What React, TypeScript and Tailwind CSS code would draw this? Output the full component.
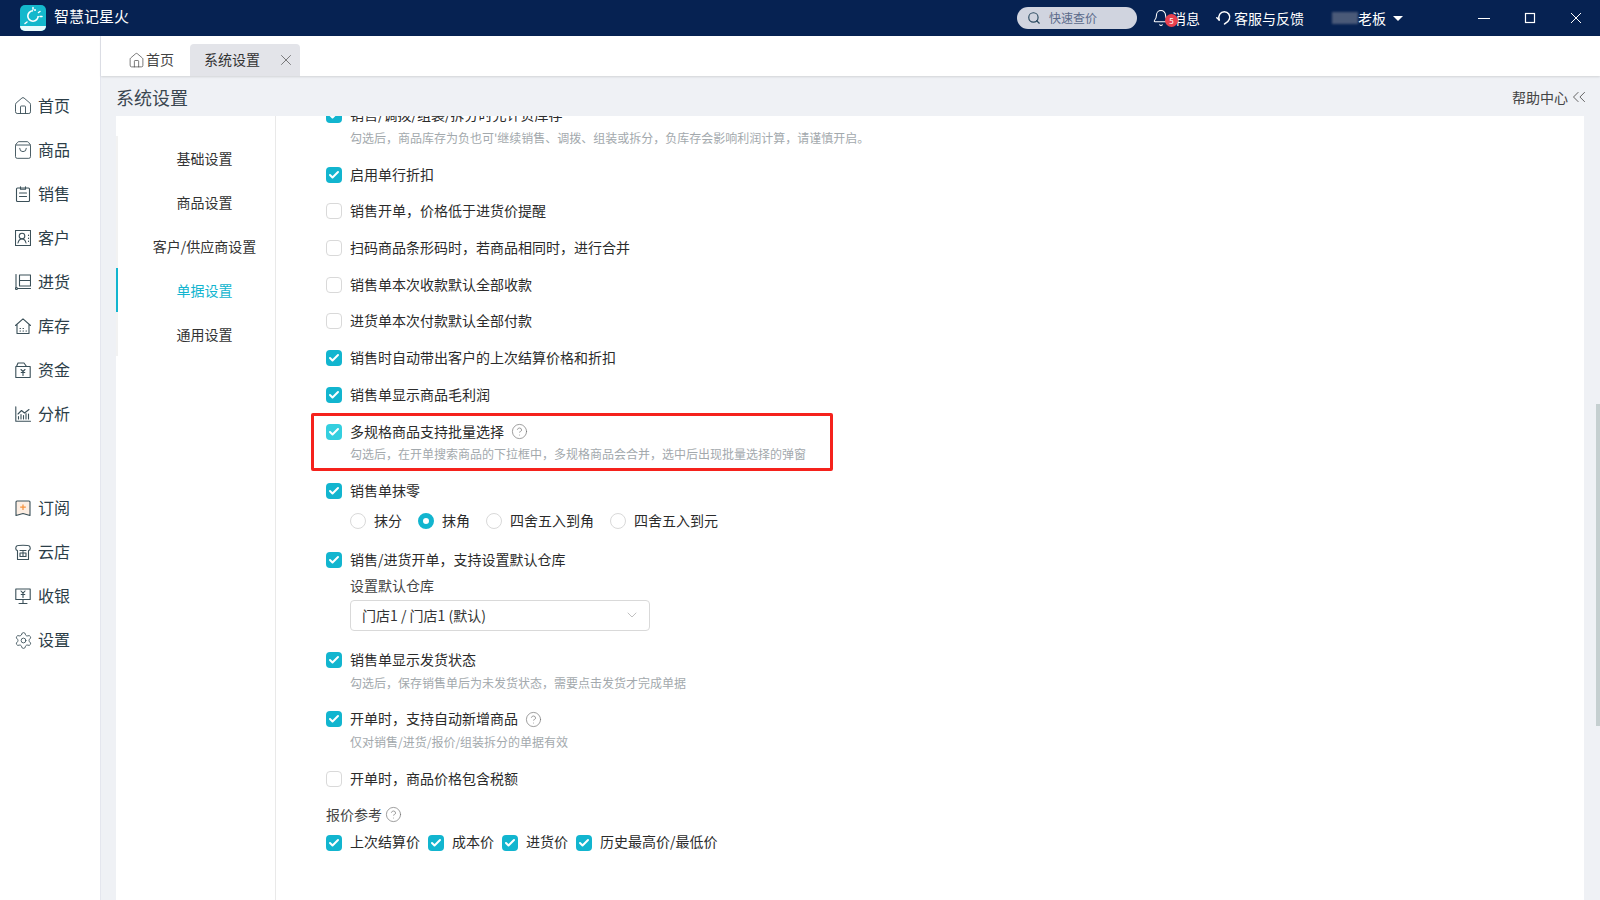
import React from "react";
import { ChevronDown, ChevronsLeft, X, Search, Check, Home, ShoppingBag, Settings, Bell, CircleHelp } from "lucide-react";

const FONT = "font-['Microsoft_YaHei','Noto_Sans_CJK_SC','Noto_Sans',sans-serif]";

type IconProps = { className?: string };

const stroke = {
  fill: "none",
  stroke: "currentColor",
  strokeWidth: 1.1,
  strokeLinecap: "round" as const,
  strokeLinejoin: "round" as const,
};

function SalesIcon({ className }: IconProps) {
  return (
    <svg viewBox="0 0 16 16" className={className} {...stroke}>
      <rect x="1.500" y="2" width="13" height="13.500" rx="1" />
      <path d="M5.500 .8v2.400h5V.8M4.500 7h7M4.500 10.500h7" />
    </svg>
  );
}

function CustomerIcon({ className }: IconProps) {
  return (
    <svg viewBox="0 0 16 16" className={className} {...stroke}>
      <rect x=".5" y=".5" width="15" height="15" />
      <circle cx="7" cy="6" r="2.800" />
      <path d="M3 13c.5-2.500 2.200-4 4-4s3.500 1.500 4 4M13.500 5v.5M13.500 8v.5M13.500 11v.5" />
    </svg>
  );
}

function PurchaseIcon({ className }: IconProps) {
  return (
    <svg viewBox="0 0 16 16" className={className} {...stroke}>
      <path d="M1 .5v13M4.500 1h11v11h-11zM4.500 6.500h11M3 14.500h12.500" />
      <circle cx="1.500" cy="14.500" r="1" />
    </svg>
  );
}

function StockIcon({ className }: IconProps) {
  return (
    <svg viewBox="0 0 16 16" className={className} {...stroke}>
      <path d="M.5 7.500 8 .8l7.500 6.700M2 6.500v9h12v-9" />
      <path d="M5 10.500h.5M8 10.500h.5M5 13h.5M8 13h.5M11 13h.5" />
    </svg>
  );
}

function FundsIcon({ className }: IconProps) {
  return (
    <svg viewBox="0 0 16 16" className={className} {...stroke}>
      <path d="M.8 4.500h14.400v11H.8zM1.500 4.500 3 1h6l2.500 3.500" />
      <path d="M6 7.500l2 2 2-2M8 9.500V13.500M6.200 10.500h3.600" />
    </svg>
  );
}

function AnalysisIcon({ className }: IconProps) {
  return (
    <svg viewBox="0 0 16 16" className={className} {...stroke}>
      <path d="M.8 .8v14.400h14.700" />
      <path d="M3 8 6.500 4.500 9.500 7 14 3.500" />
      <path d="M3.500 13v-2.500M6 13V8.500M8.500 13V9.500M11 13V7.500M13.500 13V8" />
    </svg>
  );
}

function SubscribeIcon({ className }: IconProps) {
  return (
    <svg viewBox="0 0 16 16" className={className}>
      <path d="M1 2a1 1 0 0 1 1-1h12a1 1 0 0 1 1 1v13.500L8 13.500 1 15.500z" fill="#fdeee2" stroke="currentColor" strokeWidth="1.100" strokeLinejoin="round" />
      <path d="M8 4.500v5.500M5.200 7.200h5.600" stroke="#f5913b" strokeWidth="1.200" fill="none" />
    </svg>
  );
}

function ShopIcon({ className }: IconProps) {
  return (
    <svg viewBox="0 0 16 16" className={className} {...stroke}>
      <path d="M2.500 6.500C.3 6.500.3 3 2 1.800c1-.8 11-.8 12 0C15.700 3 15.700 6.500 13.500 6.500v9h-11z" />
      <path d="M5 6.500h6M5 9h6v3.500H5zM8 7.500v5" />
    </svg>
  );
}

function CashierIcon({ className }: IconProps) {
  return (
    <svg viewBox="0 0 16 16" className={className} {...stroke}>
      <rect x=".8" y="1" width="14.400" height="10.500" />
      <path d="M8 11.500v4M4 15.500h8M6 3l2 2.200L10 3M8 5.200V9.500M6.200 6.500h3.600" />
    </svg>
  );
}

function HeadsetIcon({ className }: IconProps) {
  return (
    <svg viewBox="0 0 16 16" className={className} fill="none" stroke="currentColor" strokeWidth="1.500" strokeLinecap="round">
      <path d="M3.200 10C1.800 5.500 4.500 1.800 8.300 1.800c3.800 0 6.500 3.500 5 7.500-.8 2.200-2.500 3.700-4.800 4.700" />
      <path d="M.8 7.700 3.200 10" />
    </svg>
  );
}

// App logo: teal tile with a small sun and a label strip
function Logo() {
  return (
    <svg viewBox="0 0 26 26" className="h-[26px] w-[26px]">
      <rect width="26" height="26" rx="5" fill="#14b8cc" />
      <path d="M0 21h26a5 5 0 0 1-5 5H5a5 5 0 0 1-5-5z" fill="#e8fbfd" />
      <circle cx="13" cy="11" r="5.200" fill="none" stroke="#fff" strokeWidth="1.600" strokeDasharray="24 8" />
      <path d="M13 2.500v1.800M20 6.500l-1.500 1M22 11.500h-2M7 17l-2 1.500" stroke="#fff" strokeWidth="1.500" strokeLinecap="round" />
      <circle cx="15" cy="5" r="1" fill="#fff" />
    </svg>
  );
}

const navTop = [
  { label: "首页", icon: Home, size: "h-5 w-5 -mx-[2px]" },
  { label: "商品", icon: ShoppingBag, size: "h-5 w-5 -mx-[2px]" },
  { label: "销售", icon: SalesIcon, size: "h-4 w-4" },
  { label: "客户", icon: CustomerIcon, size: "h-4 w-4" },
  { label: "进货", icon: PurchaseIcon, size: "h-4 w-4" },
  { label: "库存", icon: StockIcon, size: "h-4 w-4" },
  { label: "资金", icon: FundsIcon, size: "h-4 w-4" },
  { label: "分析", icon: AnalysisIcon, size: "h-4 w-4" },
];

const navBottom = [
  { label: "订阅", icon: SubscribeIcon, size: "h-4 w-4" },
  { label: "云店", icon: ShopIcon, size: "h-4 w-4" },
  { label: "收银", icon: CashierIcon, size: "h-4 w-4" },
  { label: "设置", icon: Settings, size: "h-[19px] w-[19px] -mx-[1.5px]" },
];

const subMenu = ["基础设置", "商品设置", "客户/供应商设置", "单据设置", "通用设置"];

function NavItem({ label, icon: Icon, size }: { label: string; icon: React.ComponentType<any>; size: string }) {
  return (
    <div className="flex h-11 items-center gap-[7px] pl-[15px] text-base text-[#2c3e48]">
      <Icon className={`${size} shrink-0 text-[#3b5059]`} strokeWidth={1.1} />
      <span className="pb-[2px]">{label}</span>
    </div>
  );
}

function Box({ checked, light }: { checked?: boolean; light?: boolean }) {
  if (!checked) {
    return <span className="h-4 w-4 shrink-0 rounded-[4px] border border-[#d9d9d9] bg-white" />;
  }
  return (
    <span className={`flex h-4 w-4 shrink-0 items-center justify-center rounded-[4px] ${light ? "bg-[#34cfdf]" : "bg-[#12b5cf]"}`}>
      <Check className="h-3 w-3 text-white" strokeWidth={4} />
    </span>
  );
}

function Help() {
  return <CircleHelp className="h-[17px] w-[17px] text-[#777]" strokeWidth={1} />;
}

function Row({ label, checked, help, hint, light }: { label: string; checked?: boolean; help?: boolean; hint?: string; light?: boolean }) {
  return (
    <div>
      <div className="flex h-5 items-center gap-2 text-sm leading-5 text-[#2b2b2b]">
        <Box checked={checked} light={light} />
        <span className="pb-[2px]">{label}</span>
        {help && <span className="-ml-[1px] flex"><Help /></span>}
      </div>
      {hint && <p className={`${light ? "mt-[2px] mb-[1px]" : "mt-[3px]"} pl-6 text-xs leading-5 text-[#a3a9ad]`}>{hint}</p>}
    </div>
  );
}

function Radio({ label, on }: { label: string; on?: boolean }) {
  return (
    <div className="flex items-center gap-2 text-sm text-[#2b2b2b]">
      {on ? (
        <span className="h-4 w-4 rounded-full border-[5px] border-[#12b5cf] bg-white" />
      ) : (
        <span className="h-4 w-4 rounded-full border border-[#d9d9d9] bg-white" />
      )}
      <span className="pb-[2px]">{label}</span>
    </div>
  );
}

export default function App() {
  return (
    <div className={`flex h-screen w-full flex-col overflow-hidden bg-white ${FONT}`}>
      {/* Title bar */}
      <header className="flex h-9 shrink-0 items-center bg-[#062252] text-white">
        <div className="ml-5 flex items-center gap-2">
          <Logo />
          <span className="pb-1 text-[15px]">智慧记星火</span>
        </div>
        <div className="ml-auto flex h-[22px] w-[120px] items-center rounded-full bg-[#d0d4df] pl-[10px] text-xs text-[#5a6a8a]">
          <Search className="h-[14px] w-[14px] text-[#2a4a60]" strokeWidth={2} />
          <span className="ml-[8px]">快速查价</span>
        </div>
        <div className="relative ml-[15px] flex items-center text-sm">
          <Bell className="h-[18px] w-[18px]" strokeWidth={1.4} />
          <span className="absolute left-[13px] top-[6px] flex h-[13px] w-[13px] items-center justify-center rounded-full bg-[#e8414f] text-[8px]">5</span>
          <span className="ml-[2px]">消息</span>
        </div>
        <div className="ml-4 flex items-center gap-[2px] text-sm">
          <HeadsetIcon className="h-4 w-4" />
          <span>客服与反馈</span>
        </div>
        <div className="ml-[28px] flex items-center text-sm">
          <span className="h-3 w-[26px] bg-[#4a5a78] blur-[1px]" />
          <span>老板</span>
          <span className="ml-[7px] h-0 w-0 border-x-[5px] border-t-[5px] border-x-transparent border-t-white" />
        </div>
        {/* Window buttons */}
        <div className="ml-[75px] flex items-center gap-[34px] pr-[18px]">
          <svg viewBox="0 0 12 12" className="h-3 w-3" stroke="currentColor" fill="none" strokeWidth="1">
            <path d="M0 6.500h12" />
          </svg>
          <svg viewBox="0 0 12 12" className="h-3 w-3" stroke="currentColor" fill="none" strokeWidth="1.200">
            <rect x="1.500" y="1.500" width="9" height="9" />
          </svg>
          <svg viewBox="0 0 12 12" className="h-3 w-3" stroke="currentColor" fill="none" strokeWidth="1">
            <path d="M1 1l10 10M11 1 1 11" />
          </svg>
        </div>
      </header>

      <div className="flex min-h-0 flex-1">
        {/* Main navigation */}
        <aside className="w-[101px] shrink-0 border-r border-[#e4e6ee] pt-12">
          {navTop.map((n) => (
            <NavItem key={n.label} {...n} />
          ))}
          <div className="h-[50px]" />
          {navBottom.map((n) => (
            <NavItem key={n.label} {...n} />
          ))}
        </aside>

        <div className="flex min-w-0 flex-1 flex-col bg-[#eff1f5]">
          {/* Open tabs */}
          <div className="flex h-10 shrink-0 items-end bg-white pl-[27px] text-sm text-[#333] shadow-[0_1px_2px_rgba(0,0,0,0.12)]">
            <div className="flex h-8 w-[62px] items-center gap-[1px] text-[#444]">
              <Home className="h-[17px] w-[17px]" strokeWidth={1} />
              <span className="pb-[2px]">首页</span>
            </div>
            <div className="flex h-8 w-[110px] items-center justify-between rounded-t bg-[#e3e4e9] pl-[14px] pr-[5px]">
              <span className="pb-[2px]">系统设置</span>
              <X className="h-[18px] w-[18px] text-[#555]" strokeWidth={1} />
            </div>
          </div>

          {/* Page title */}
          <div className="flex h-10 shrink-0 items-center justify-between pl-[15px] pr-[10px]">
            <h1 className="pt-[2px] text-lg text-[#3a4650]">系统设置</h1>
            <div className="flex items-center pt-[2px] text-sm text-[#444]">
              <span>帮助中心</span>
              <ChevronsLeft className="h-[22px] w-[22px] text-[#555]" strokeWidth={1} />
            </div>
          </div>

          <div className="relative flex min-h-0 flex-1 pl-[15px] pr-4">
            <div className="flex min-w-0 flex-1 bg-white">
              {/* Settings sections */}
              <nav className="w-[160px] shrink-0 border-r border-[#e9e9e9] pt-5">
                <div className="border-l-2 border-[#f2f2f2] text-sm text-[#333]">
                  {subMenu.map((s) => (
                    <div
                      key={s}
                      className={`-ml-[2px] flex h-11 items-center justify-center pl-[18px] ${s === "单据设置" ? "text-[#12b5cf] shadow-[inset_2px_0_0_#12b5cf]" : ""}`}
                    >
                      {s}
                    </div>
                  ))}
                </div>
              </nav>

              {/* Document options, scrolled part-way */}
              <div className="relative min-w-0 flex-1 overflow-hidden pl-[50px]">
                <div className="-mt-[11px] flex flex-col gap-[16.7px]">
                  <Row
                    checked
                    label="销售/调拨/组装/拆分时允许负库存"
                    hint="勾选后，商品库存为负也可'继续销售、调拨、组装或拆分，负库存会影响利润计算，请谨慎开启。"
                  />
                  <Row checked label="启用单行折扣" />
                  <Row label="销售开单，价格低于进货价提醒" />
                  <Row label="扫码商品条形码时，若商品相同时，进行合并" />
                  <Row label="销售单本次收款默认全部收款" />
                  <Row label="进货单本次付款默认全部付款" />
                  <Row checked label="销售时自动带出客户的上次结算价格和折扣" />
                  <Row checked label="销售单显示商品毛利润" />
                  <Row
                    checked
                    light
                    help
                    label="多规格商品支持批量选择"
                    hint="勾选后，在开单搜索商品的下拉框中，多规格商品会合并，选中后出现批量选择的弹窗"
                  />
                  <div>
                    <Row checked label="销售单抹零" />
                    <div className="mt-[10px] flex h-5 gap-4 pl-6">
                      <Radio label="抹分" />
                      <Radio on label="抹角" />
                      <Radio label="四舍五入到角" />
                      <Radio label="四舍五入到元" />
                    </div>
                  </div>
                  <div className="mt-[2px] mb-[2px]">
                    <Row checked label="销售/进货开单，支持设置默认仓库" />
                    <div className="pl-6">
                      <p className="mt-[5px] text-sm leading-5 text-[#444]">设置默认仓库</p>
                      <div className="mt-[5px] flex h-[31px] w-[300px] items-center justify-between rounded border border-[#d9d9d9] pl-[11px] pr-[9px] text-sm text-[#333]">
                        <span className="pb-[1px]">门店1 / 门店1 (默认)</span>
                        <ChevronDown className="h-[16px] w-[16px] text-[#aaa]" strokeWidth={1.1} />
                      </div>
                    </div>
                  </div>
                  <Row checked label="销售单显示发货状态" hint="勾选后，保存销售单后为未发货状态，需要点击发货才完成单据" />
                  <Row checked help label="开单时，支持自动新增商品" hint="仅对销售/进货/报价/组装拆分的单据有效" />
                  <Row label="开单时，商品价格包含税额" />
                  <div>
                    <div className="flex h-5 items-center gap-[3px] text-sm text-[#444]">
                      <span className="pb-[4px]">报价参考</span>
                      <span className="-mt-[2px] flex"><Help /></span>
                    </div>
                    <div className="mt-[7px] flex h-5 gap-2">
                      {["上次结算价", "成本价", "进货价", "历史最高价/最低价"].map((p) => (
                        <div key={p} className="flex items-center gap-2 text-sm text-[#2b2b2b]">
                          <Box checked />
                          <span className="pb-[4px]">{p}</span>
                        </div>
                      ))}
                    </div>
                  </div>
                </div>
              </div>
            </div>

            {/* Page scrollbar */}
            <div className="absolute right-0 top-[288px] h-[322px] w-1 bg-[#c5cfd0]" />
          </div>
        </div>
      </div>

      {/* Highlight frame around one option */}
      <div className="pointer-events-none absolute left-[311px] top-[413px] h-[58px] w-[522px] rounded-[2px] border-[3px] border-[#f5221c]" />
    </div>
  );
}
